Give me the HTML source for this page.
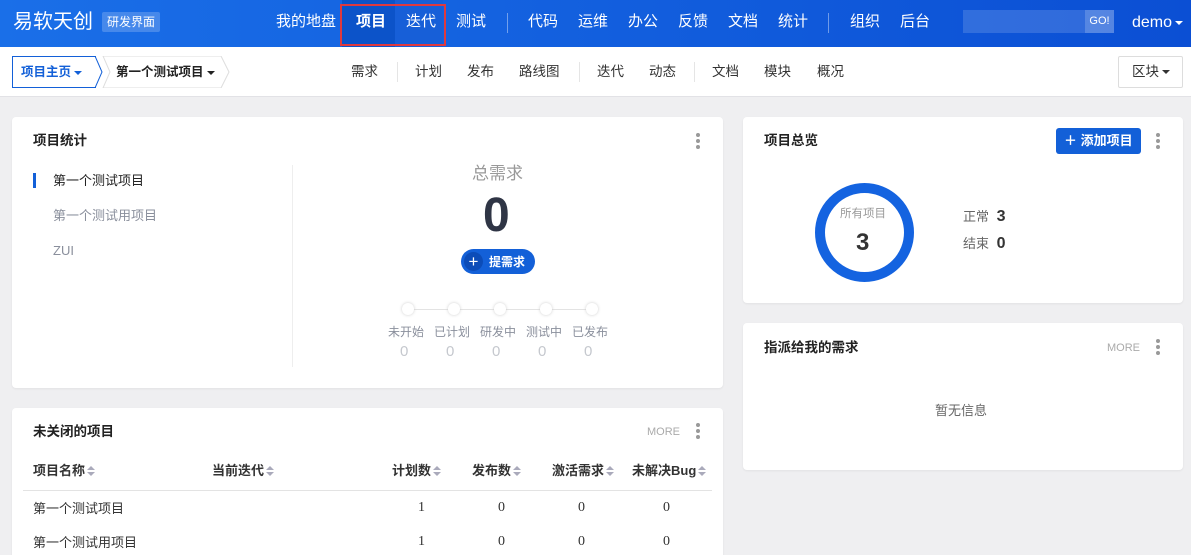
<!DOCTYPE html><html><head><meta charset="utf-8"><style>
*{box-sizing:border-box;margin:0;padding:0}
html,body{width:1191px;height:555px;overflow:hidden}
body{background:#efeff1;font-family:"Liberation Sans","Noto Sans CJK SC",sans-serif;font-size:13px;color:#3c4353;position:relative}
.a{position:absolute;line-height:1.2}
#hd{left:0;top:0;width:1191px;height:47px;background:linear-gradient(90deg,#1a6fe8,#0b4fd4)}
.hn{color:#fff;font-size:15px;top:13px}
#sub{left:0;top:47px;width:1191px;height:50px;background:#fff;border-bottom:1px solid #e2e2e6}
.sn{top:64px;font-size:13.5px;color:#333}
.sep{width:1px;background:#e5e5e5}
.card{background:#fff;border-radius:4px;box-shadow:0 1px 2px rgba(0,0,0,.06)}
.tt{font-weight:bold;font-size:13.5px;color:#222}
.dots{width:4px}
.dots i{display:block;width:4px;height:4px;border-radius:2px;background:#999;margin-bottom:2px}
.g{color:#8a8f9c}
.num{font-family:"Liberation Serif",serif;font-size:14px;color:#333}
.th{font-weight:bold;color:#333;top:463px}
.car{display:inline-block;width:0;height:0;border-left:4px solid transparent;border-right:4px solid transparent;border-top:4px solid currentColor;vertical-align:middle;margin-left:3px}
.so{display:inline-block;width:8px;height:11px;vertical-align:middle;margin-left:2px;position:relative}
.so:before{content:"";position:absolute;left:0;top:0;border-left:4px solid transparent;border-right:4px solid transparent;border-bottom:4px solid #aab}
.so:after{content:"";position:absolute;left:0;top:6px;border-left:4px solid transparent;border-right:4px solid transparent;border-top:4px solid #aab}
</style></head><body>
<div id="hd" class="a"></div>
<div class="a" style="left:13px;top:10px;color:#fff;font-size:20px">易软天创</div>
<div class="a" style="left:102px;top:12px;background:rgba(255,255,255,.2);color:#fff;font-size:12px;padding:3px 5px;border-radius:2px">研发界面</div>
<div class="a" style="left:342px;top:0;width:53px;height:47px;background:#0c53c9"></div>
<div class="a" style="left:395px;top:0;width:48px;height:47px;background:#175fd8"></div>
<div class="a" style="left:340px;top:4px;width:106px;height:42px;border:2px solid #e0393e"></div>
<div class="a hn" style="left:276px">我的地盘</div>
<div class="a hn" style="left:356px;font-weight:bold">项目</div>
<div class="a hn" style="left:406px">迭代</div>
<div class="a hn" style="left:456px">测试</div>
<div class="a" style="left:507px;top:13px;width:1px;height:20px;background:rgba(255,255,255,.4)"></div>
<div class="a hn" style="left:528px">代码</div>
<div class="a hn" style="left:578px">运维</div>
<div class="a hn" style="left:628px">办公</div>
<div class="a hn" style="left:678px">反馈</div>
<div class="a hn" style="left:728px">文档</div>
<div class="a hn" style="left:778px">统计</div>
<div class="a" style="left:828px;top:13px;width:1px;height:20px;background:rgba(255,255,255,.4)"></div>
<div class="a hn" style="left:850px">组织</div>
<div class="a hn" style="left:900px">后台</div>
<div class="a" style="left:963px;top:10px;width:122px;height:23px;background:rgba(255,255,255,.15)"></div>
<div class="a" style="left:1085px;top:10px;width:29px;height:23px;background:rgba(255,255,255,.3);color:#fff;font-size:11px;text-align:center;line-height:23px">GO!</div>
<div class="a" style="left:1132px;top:13px;color:#fff;font-size:16px">demo<span class="car" style="color:#fff"></span></div>
<div id="sub" class="a"></div>
<div class="a" style="left:12px;top:56px;width:84px;height:32px;border:1px solid #1360d8;border-right:none;color:#1360d8;font-weight:bold;font-size:12.5px;padding:0 0 0 8px;line-height:30px">项目主页<span class="car"></span></div>
<svg class="a" style="left:94px;top:56px" width="140" height="32"><path d="M1 0 L8 16 L1 32" fill="none" stroke="#1360d8"/><path d="M9 0 L127 0 L135 16 L127 32 L9 32 L16 16Z" fill="none" stroke="#ddd"/></svg>
<div class="a" style="left:116px;top:56px;line-height:32px;font-weight:bold;font-size:12.5px;color:#222">第一个测试项目<span class="car"></span></div>
<div class="a sn" style="left:351px">需求</div>
<div class="a sep" style="left:397px;top:62px;height:20px"></div>
<div class="a sn" style="left:415px">计划</div>
<div class="a sn" style="left:467px">发布</div>
<div class="a sn" style="left:519px">路线图</div>
<div class="a sep" style="left:579px;top:62px;height:20px"></div>
<div class="a sn" style="left:597px">迭代</div>
<div class="a sn" style="left:649px">动态</div>
<div class="a sep" style="left:694px;top:62px;height:20px"></div>
<div class="a sn" style="left:712px">文档</div>
<div class="a sn" style="left:764px">模块</div>
<div class="a sn" style="left:817px">概况</div>
<div class="a" style="left:1118px;top:56px;width:65px;height:32px;border:1px solid #ddd;border-radius:2px;padding-left:13px;line-height:30px;font-size:13.5px;color:#333">区块<span class="car"></span></div>

<div class="a card" style="left:12px;top:117px;width:711px;height:271px"></div>
<div class="a tt" style="left:33px;top:133px">项目统计</div>
<div class="a dots" style="left:696px;top:133px"><i></i><i></i><i></i></div>
<div class="a" style="left:33px;top:173px;width:3px;height:15px;background:#1360d8"></div>
<div class="a" style="left:53px;top:173px;color:#222">第一个测试项目</div>
<div class="a g" style="left:53px;top:208px">第一个测试用项目</div>
<div class="a g" style="left:53px;top:243px">ZUI</div>
<div class="a" style="left:292px;top:165px;width:1px;height:202px;background:#eee"></div>
<div class="a" style="left:472px;top:164px;font-size:17px;color:#999">总需求</div>
<div class="a" style="left:483px;top:186px;font-size:48px;font-weight:bold;color:#2f3545;line-height:60px">0</div>
<div class="a" style="left:461px;top:249px;width:74px;height:25px;border-radius:13px;background:#1360d8"></div>
<div class="a" style="left:464px;top:252px;width:19px;height:19px;border-radius:10px;background:#0c4cb8;color:#fff;text-align:center;line-height:19px;font-size:17px">+</div>
<div class="a" style="left:489px;top:255px;color:#fff;font-weight:bold;font-size:12px">提需求</div>
<div class="a" style="left:408px;top:309px;width:186px;height:1px;background:#e3e3e3"></div>
<div class="a" style="left:402px;top:303px;width:12px;height:12px;border-radius:6px;background:#fff;box-shadow:0 0 3px #ccc"></div>
<div class="a" style="left:448px;top:303px;width:12px;height:12px;border-radius:6px;background:#fff;box-shadow:0 0 3px #ccc"></div>
<div class="a" style="left:494px;top:303px;width:12px;height:12px;border-radius:6px;background:#fff;box-shadow:0 0 3px #ccc"></div>
<div class="a" style="left:540px;top:303px;width:12px;height:12px;border-radius:6px;background:#fff;box-shadow:0 0 3px #ccc"></div>
<div class="a" style="left:586px;top:303px;width:12px;height:12px;border-radius:6px;background:#fff;box-shadow:0 0 3px #ccc"></div>
<div class="a g" style="left:388px;top:325px;font-size:12px">未开始</div>
<div class="a g" style="left:434px;top:325px;font-size:12px">已计划</div>
<div class="a g" style="left:480px;top:325px;font-size:12px">研发中</div>
<div class="a g" style="left:526px;top:325px;font-size:12px">测试中</div>
<div class="a g" style="left:572px;top:325px;font-size:12px">已发布</div>
<div class="a" style="left:400px;top:343px;color:#c5c8ce;font-size:15px">0</div>
<div class="a" style="left:446px;top:343px;color:#c5c8ce;font-size:15px">0</div>
<div class="a" style="left:492px;top:343px;color:#c5c8ce;font-size:15px">0</div>
<div class="a" style="left:538px;top:343px;color:#c5c8ce;font-size:15px">0</div>
<div class="a" style="left:584px;top:343px;color:#c5c8ce;font-size:15px">0</div>

<div class="a card" style="left:743px;top:117px;width:440px;height:186px"></div>
<div class="a tt" style="left:764px;top:133px">项目总览</div>
<div class="a" style="left:1056px;top:128px;width:85px;height:26px;background:#1360d8;border-radius:3px;color:#fff;font-weight:bold;font-size:13px;padding-left:8px;line-height:26px">＋ 添加项目</div>
<div class="a dots" style="left:1156px;top:133px"><i></i><i></i><i></i></div>
<div class="a" style="left:815px;top:183px;width:99px;height:99px;border-radius:50%;border:10px solid #1463e0"></div>
<div class="a" style="left:840px;top:208px;font-size:11.5px;color:#999">所有项目</div>
<div class="a" style="left:856px;top:229px;font-size:24px;font-weight:bold;color:#333">3</div>
<div class="a" style="left:963px;top:207px;color:#666">正常 <b style="font-size:16px;color:#333;margin-left:4px">3</b></div>
<div class="a" style="left:963px;top:234px;color:#666">结束 <b style="font-size:16px;color:#333;margin-left:4px">0</b></div>

<div class="a card" style="left:743px;top:323px;width:440px;height:147px"></div>
<div class="a tt" style="left:764px;top:340px">指派给我的需求</div>
<div class="a g" style="left:1107px;top:342px;font-size:11px;color:#aaa">MORE</div>
<div class="a dots" style="left:1156px;top:339px"><i></i><i></i><i></i></div>
<div class="a" style="left:935px;top:403px;color:#666">暂无信息</div>

<div class="a card" style="left:12px;top:408px;width:711px;height:160px"></div>
<div class="a tt" style="left:33px;top:424px">未关闭的项目</div>
<div class="a g" style="left:647px;top:426px;font-size:11px;color:#aaa">MORE</div>
<div class="a dots" style="left:696px;top:423px"><i></i><i></i><i></i></div>
<div class="a th" style="left:33px">项目名称<span class="so"></span></div>
<div class="a th" style="left:212px">当前迭代<span class="so"></span></div>
<div class="a th" style="left:392px">计划数<span class="so"></span></div>
<div class="a th" style="left:472px">发布数<span class="so"></span></div>
<div class="a th" style="left:552px">激活需求<span class="so"></span></div>
<div class="a th" style="left:632px">未解决Bug<span class="so"></span></div>
<div class="a" style="left:23px;top:490px;width:689px;height:1px;background:#e3e3e3"></div>
<div class="a" style="left:33px;top:501px;color:#333">第一个测试项目</div>
<div class="a" style="left:33px;top:535px;color:#333">第一个测试用项目</div>
<div class="a num" style="left:418px;top:500px">1</div><div class="a num" style="left:498px;top:500px">0</div><div class="a num" style="left:578px;top:500px">0</div><div class="a num" style="left:663px;top:500px">0</div>
<div class="a num" style="left:418px;top:534px">1</div><div class="a num" style="left:498px;top:534px">0</div><div class="a num" style="left:578px;top:534px">0</div><div class="a num" style="left:663px;top:534px">0</div>
</body></html>
